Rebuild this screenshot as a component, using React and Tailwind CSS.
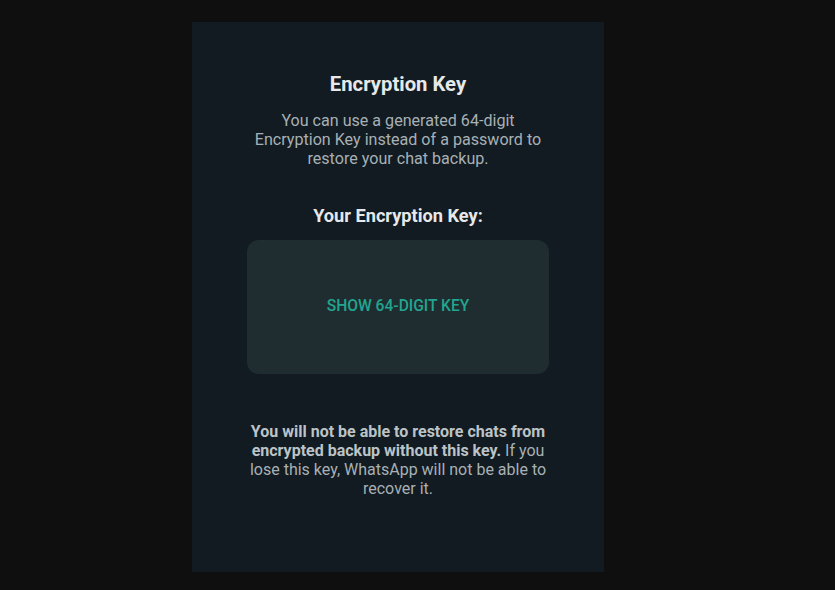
export default function App() {
    return (
        <div className="min-h-[590px] bg-[#0f0f0f] pl-[192px] pt-[22px]" style={{ fontFamily: 'Roboto, "Noto Sans", sans-serif' }}>
            <div className="flex h-[550px] w-[412px] flex-col items-center bg-[#111b21] pt-[50px] text-center">
                <h1 className="text-[20.3px] font-bold leading-[24px] text-[#e6e9eb]">Encryption Key</h1>
                <p className="mt-[15px] text-[16.1px] leading-[19px] text-[#a8b0b5]">
                    You can use a generated 64-digit
                    <br />
                    Encryption Key instead of a password to
                    <br />
                    restore your chat backup.
                </p>
                <h2 className="mt-[37px] text-[18.2px] font-bold leading-[22px] text-[#e6e9eb]">Your Encryption Key:</h2>
                <button className="mt-[13px] flex h-[134px] w-[302px] items-center justify-center rounded-[12px] bg-[#1f2d31] text-[15.6px] font-medium text-[#22a58f]">
                    SHOW 64-DIGIT KEY
                </button>
                <p className="mt-[48px] text-[16px] leading-[19px] text-[#a8b0b5]">
                    <span className="font-bold text-[#bcc3c7]">
                        You will not be able to restore chats from
                        <br />
                        encrypted backup without this key.
                    </span>{' '}
                    If you
                    <br />
                    lose this key, WhatsApp will not be able to
                    <br />
                    recover it.
                </p>
            </div>
        </div>
    );
}
